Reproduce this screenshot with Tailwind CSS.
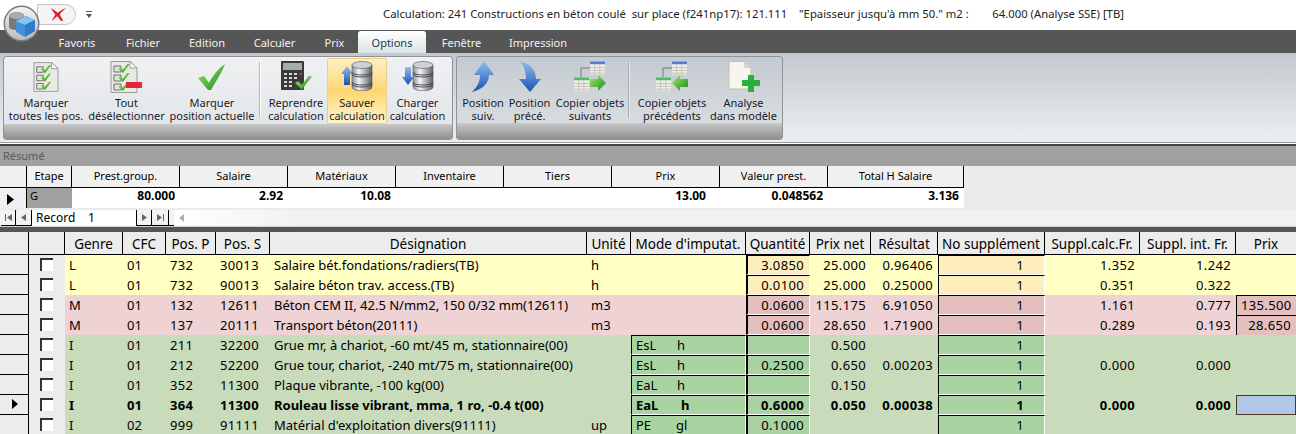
<!DOCTYPE html>
<html lang="fr">
<head>
<meta charset="UTF-8">
<title>Calculation</title>
<script src="https://cdn.jsdelivr.net/npm/@tailwindcss/browser@4"></script>
</head>
<body class="bg-white font-['Noto_Sans',sans-serif] text-black">
<!-- shared icon parts -->
<svg class="absolute w-0 h-0">
  <defs>
    <linearGradient id="green" x1="0" y1="0" x2="1" y2="1"><stop offset="0" stop-color="#a6e86c"/><stop offset="1" stop-color="#138a1c"/></linearGradient>
    <linearGradient id="blue" x1="0" y1="0" x2="0" y2="1"><stop offset="0" stop-color="#8fc1ee"/><stop offset="1" stop-color="#1b50b4"/></linearGradient>
    <linearGradient id="disk" x1="0" y1="0" x2="1" y2="0"><stop offset="0" stop-color="#8b8f94"/><stop offset=".35" stop-color="#f4f4f4"/><stop offset="1" stop-color="#5d6065"/></linearGradient>
    <linearGradient id="orb" x1="0" y1="0" x2="0" y2="1"><stop offset="0" stop-color="#f4f4f4"/><stop offset="1" stop-color="#bcbcbc"/></linearGradient>
    <symbol id="check" viewBox="0 0 10 8"><path d="M0 4 2 3 4 5 8 0 10 0 4 8z" fill="url(#green)"/></symbol>
    <symbol id="list" viewBox="0 0 28 32">
      <path d="M1 .5H20L27 7V31.5H1z" fill="#e8e8e4" stroke="#9a9a96"/>
      <path d="M20 .5V7H27z" fill="#fff" stroke="#9a9a96"/>
      <path d="M4 5h7v6H4zM4 14h7v6H4zM4 23h7v6H4z" fill="#dfe3dc" stroke="#707070"/>
      <use href="#check" x="8" y="3" width="12" height="9"/>
      <use href="#check" x="8" y="12" width="12" height="9"/>
      <use href="#check" x="8" y="21" width="12" height="9"/>
    </symbol>
    <symbol id="db" viewBox="0 0 22 30">
      <path d="M1 4V26C1 31 21 31 21 26V4z" fill="url(#disk)" stroke="#55585c" stroke-width=".6"/>
      <ellipse cx="11" cy="4" rx="10" ry="3.5" fill="#cfd2d5" stroke="#55585c" stroke-width=".6"/>
      <path d="M1 11C1 15 21 15 21 11M1 13C1 17 21 17 21 13M1 21C1 25 21 25 21 21M1 23C1 27 21 27 21 23" fill="none" stroke="#3d4044" stroke-width=".9"/>
    </symbol>
    <symbol id="sheet" viewBox="0 0 16 14">
      <rect width="16" height="14" fill="#f0f0e8"/>
      <rect width="16" height="3" fill="#5878d8"/>
      <path d="M0 6.5H16M0 9.500H16M0 12.500H16M5 3V14M10.500 3V14" stroke="#b8b8b0" stroke-width=".8"/>
    </symbol>
    <symbol id="sheetg" viewBox="0 0 16 14">
      <rect width="16" height="14" fill="#f0f0e8"/>
      <rect width="16" height="3" fill="#48c060"/>
      <path d="M0 6.5H16M0 9.500H16M0 12.500H16M5 3V14M10.500 3V14" stroke="#b8b8b0" stroke-width=".8"/>
    </symbol>
  </defs>
</svg>

<div class="relative w-[1296px] h-[434px] overflow-hidden">
  <!-- app button -->
  <div class="absolute left-[3px] top-[5px] z-10 w-[37px] h-[37px]">
    <svg viewBox="0 0 37 37" class="w-[37px] h-[37px]">
      <circle cx="18.500" cy="18.500" r="18" fill="#7c7c7c"/>
      <circle cx="18.500" cy="18.500" r="16.500" fill="url(#orb)"/>
      <path d="M6 11C6 6 21 6 21 11V22C21 26 6 26 6 22z" fill="#77797b"/>
      <ellipse cx="13.500" cy="10.500" rx="7.500" ry="3.500" fill="#a9abad"/>
      <path d="M13 16 23 11 32 15V26L22 32 13 27z" fill="#3f92d8"/>
      <path d="M13 16 23 11 32 15 22 20z" fill="#86c5f0"/>
      <path d="M22 20V32L32 26V15z" fill="#2f7cc6"/>
    </svg>
  </div>

  <!-- title bar -->
  <div class="flex items-center h-[30px] pl-[37px] pb-[1px]">
    <div class="flex items-center justify-center w-[39px] h-[21px] border border-[#c4c4c4] rounded-r-full bg-[#f4f4f4]">
      <svg viewBox="0 0 20 16" class="w-[18px] h-[15px] ml-[2px]"><path d="M2 1C6 3 8 5 10 6 12 4 15 2 19 1 16 3 13 6 12 8 13 11 15 13 16 15L13 15C12 13 10 11 9 10 7 12 5 14 3 15 4 13 6 10 7 8 5 5 3 3 2 1z" fill="#d8202a"/></svg>
    </div>
    <svg viewBox="0 0 6 7" class="w-[6px] h-[7px] ml-[10px]"><path d="M0 0H6V1H0zM0 3H6L3 7z" fill="#555"/></svg>
    <span class="ml-[291px] text-[11.300px] whitespace-pre text-[#222]">Calculation: 241 Constructions en béton coulé  sur place (f241np17): 121.111    "Epaisseur jusqu'à mm 50." m2 :        64.000 (Analyse SSE) [TB]</span>
  </div>

  <!-- tabs -->
  <div class="flex h-[23px] pl-[44px] bg-[#565656] text-[11px] text-[#f2f2f2] leading-[25px] text-center">
    <div class="w-[66px]">Favoris</div>
    <div class="w-[66px]">Fichier</div>
    <div class="w-[62px]">Edition</div>
    <div class="w-[73px]">Calculer</div>
    <div class="w-[47px]">Prix</div>
    <div class="w-[68px] rounded-t-[3px] bg-gradient-to-b from-white to-[#d9e6e8] text-[#1c3a44] mt-[1px] leading-[23px]">Options</div>
    <div class="w-[71px]">Fenêtre</div>
    <div class="w-[82px]">Impression</div>
  </div>

  <!-- ribbon -->
  <div class="flex gap-[3px] h-[89px] pt-[3px] pl-[3px] bg-gradient-to-b from-[#c4c9cf] to-[#ebeff1] text-[11px] leading-[13px] text-[#1a1a2a] text-center">
    <div class="flex flex-col w-[450px] h-[84px] border border-[#8e9398] rounded-[3px] overflow-hidden bg-gradient-to-b from-[#f0f1f3] to-[#dfe3e6]">
      <div class="flex h-[68px] pt-[1px]">
        <div class="w-[84px] flex flex-col items-center">
          <svg class="w-[26px] h-[32px] mt-[3px] mb-[3px]"><use href="#list"/></svg>
          <div class="whitespace-nowrap">Marquer<br>toutes les pos.</div>
        </div>
        <div class="w-[77px] flex flex-col items-center">
          <svg viewBox="0 0 34 32" class="w-[34px] h-[32px] mt-[3px] mb-[3px]"><use href="#list" width="28" height="32"/><rect x="16" y="21" width="16" height="6" fill="#e3273a"/></svg>
          <div class="whitespace-nowrap">Tout<br>désélectionner</div>
        </div>
        <div class="w-[94px] flex flex-col items-center">
          <svg viewBox="0 0 28 28" class="w-[28px] h-[28px] mt-[5px] mb-[5px]"><path d="M0 15 6 13 11 20C15 12 21 5 27 1 24 9 17 20 13 27H10z" fill="url(#green)"/></svg>
          <div class="whitespace-nowrap">Marquer<br>position actuelle</div>
        </div>
        <div class="w-[2px] h-[56px] mt-[4px] mr-[5px] bg-[#b4b7ba] border-r border-white"></div>
        <div class="w-[60px] flex flex-col items-center">
          <svg viewBox="0 0 32 30" class="w-[32px] h-[30px] mt-[3px] mb-[5px]">
            <rect x="1" width="23" height="29" rx="1" fill="#3a3a3a"/>
            <rect x="3" y="2" width="19" height="7" fill="#a8aca8"/>
            <path d="M4 12h3v2H4zM9 12h3v2H9zM14 12h3v2h-3zM4 16h3v2H4zM9 16h3v2H9zM14 16h3v2h-3zM4 20h3v2H4zM9 20h3v2H9zM4 24h3v2H4zM9 24h3v2H9z" fill="#d8d8d8"/>
            <rect x="19" y="12" width="3" height="2" fill="#d83030"/>
            <use href="#check" x="15" y="15" width="17" height="14"/>
          </svg>
          <div class="whitespace-nowrap">Reprendre<br>calculation</div>
        </div>
        <div class="w-[60px] h-[66px] ml-[1px] flex flex-col items-center rounded-[2px] border border-[#e8cf8e] bg-gradient-to-b from-[#fff0c0] via-[#fed671] to-[#fff3c8]">
          <svg viewBox="0 0 32 30" class="w-[32px] h-[30px] mt-[2px] mb-[5px]"><use href="#db" x="10" width="22" height="30"/><path d="M6 5 12 13H9V24H3V13H0z" fill="url(#blue)"/></svg>
          <div class="whitespace-nowrap">Sauver<br>calculation</div>
        </div>
        <div class="w-[59px] ml-[1px] flex flex-col items-center">
          <svg viewBox="0 0 32 30" class="w-[32px] h-[30px] mt-[3px] mb-[5px]"><use href="#db" x="10" width="22" height="30"/><path d="M3 6H9V16H12L6 24 0 16H3z" fill="url(#blue)"/></svg>
          <div class="whitespace-nowrap">Charger<br>calculation</div>
        </div>
      </div>
      <div class="h-[16px] bg-gradient-to-b from-[#c9c9c9] to-[#8f8f8f]"></div>
    </div>

    <div class="flex flex-col w-[327px] h-[84px] border border-[#8e9398] rounded-[3px] overflow-hidden bg-gradient-to-b from-[#c4cad1] to-[#dde1e4]">
      <div class="flex h-[68px] pt-[1px] pl-[3px]">
        <div class="w-[46px] flex flex-col items-center">
          <svg viewBox="0 0 24 32" class="w-[24px] h-[32px] mt-[3px] mb-[3px]"><path d="M13 0 23 14H18C18 22 12 28 1 31 7 25 9 20 9 14H3z" fill="url(#blue)"/></svg>
          <div class="whitespace-nowrap">Position<br>suiv.</div>
        </div>
        <div class="w-[47px] flex flex-col items-center">
          <svg viewBox="0 0 24 32" class="w-[24px] h-[32px] mt-[3px] mb-[3px]"><path d="M2 0C12 2 18 9 18 18H23L12 31 1 18H8C8 11 6 5 2 0z" fill="url(#blue)"/></svg>
          <div class="whitespace-nowrap">Position<br>précé.</div>
        </div>
        <div class="w-[70px] ml-[2px] flex flex-col items-center">
          <svg viewBox="0 0 32 32" class="w-[32px] h-[32px] mt-[3px] mb-[3px]"><use href="#sheet" x="16" width="15" height="14"/><use href="#sheetg" y="16" width="15" height="14"/><path d="M7 16V7H16" fill="none" stroke="#777"/><path d="M16 18H24V14L32 22 24 30V26H16z" fill="url(#green)"/></svg>
          <div class="whitespace-nowrap">Copier objets<br>suivants</div>
        </div>
        <div class="w-[2px] h-[56px] mt-[4px] ml-[3px] mr-[6px] bg-[#a9adb1] border-r border-[#e8e8e8]"></div>
        <div class="w-[72px] flex flex-col items-center">
          <svg viewBox="0 0 32 32" class="w-[32px] h-[32px] mt-[3px] mb-[3px]"><use href="#sheet" x="16" width="15" height="14"/><use href="#sheetg" y="16" width="15" height="14"/><path d="M7 16V7H16" fill="none" stroke="#777"/><path d="M32 18H24V14L16 22 24 30V26H32z" fill="url(#green)"/></svg>
          <div class="whitespace-nowrap">Copier objets<br>précédents</div>
        </div>
        <div class="w-[71px] flex flex-col items-center">
          <svg viewBox="0 0 32 32" class="w-[32px] h-[32px] mt-[3px] mb-[3px]"><path d="M1 .5H16L23 7V28H1z" fill="#f6f6ee" stroke="#c8c490"/><path d="M16 .5V7H23z" fill="#d8d8d8"/><path d="M20 14H26V19H32V25H26V31H20V25H14V19H20z" fill="#28b038"/></svg>
          <div class="whitespace-nowrap">Analyse<br>dans modèle</div>
        </div>
      </div>
      <div class="h-[16px] bg-gradient-to-b from-[#c9c9c9] to-[#8f8f8f]"></div>
    </div>
  </div>
  <div class="h-[1px] bg-[#999]"></div>
  <div class="h-[1px] bg-white"></div>
  <div class="h-[2px] bg-[#444]"></div>

  <!-- résumé -->
  <div class="h-[20px] bg-[#a0a0a0] pl-[3px] text-[11px] leading-[20px] text-[#5a5a5a]">Résumé</div>
  <div class="h-[60px] bg-[#ebebeb]">
    <div class="grid grid-cols-[27px_45px_108px_108px_108px_108px_108px_108px_108px_136px] w-[964px] h-[22px] text-[11px] leading-[20px] text-center bg-[#f0f0f0] border-b border-black [&>div]:border-r [&>div]:border-black">
      <div></div><div>Etape</div><div>Prest.group.</div><div>Salaire</div><div>Matériaux</div><div>Inventaire</div><div>Tiers</div><div>Prix</div><div>Valeur prest.</div><div>Total H Salaire</div>
    </div>
    <div class="grid grid-cols-[27px_45px_108px_108px_108px_108px_108px_108px_108px_136px] w-[964px] h-[20px] bg-white text-[12px] font-bold leading-[15px] text-right [&>div]:pr-[5px]">
      <div class="flex items-center justify-center bg-[#f0f0f0] border-r border-black"><svg viewBox="0 0 7 11" class="w-[7px] h-[11px] mt-[3px]"><path d="M0 0 7 5.500 0 11z"/></svg></div>
      <div class="bg-[#a0a0a0] text-left font-normal text-[11px] pl-[3px]">G</div>
      <div>80.000</div><div>2.92</div><div>10.08</div><div></div><div></div><div class="!pr-[14px]">13.00</div><div>0.048562</div><div>3.136</div>
    </div>

    <!-- record navigator -->
    <div class="flex h-[16px] mt-[2px] text-[12px] leading-[16px] bg-[#f2f2f2]">
      <div class="flex items-center justify-center w-[15px] ml-[1px] border-r border-b border-black"><svg viewBox="0 0 7 7" class="w-[7px] h-[7px]"><path d="M0 0H1V7H0zM7 0V7L2 3.500z" fill="#666"/></svg></div>
      <div class="flex items-center justify-center w-[16px] border-r border-b border-black"><svg viewBox="0 0 5 7" class="w-[5px] h-[7px]"><path d="M5 0V7L0 3.500z" fill="#666"/></svg></div>
      <div class="w-[49px] pl-[4px] bg-white">Record</div>
      <div class="w-[55px] pl-[7px] bg-white">1</div>
      <div class="flex items-center justify-center w-[16px] border-l border-r border-b border-black"><svg viewBox="0 0 5 7" class="w-[5px] h-[7px]"><path d="M0 0V7L5 3.500z" fill="#666"/></svg></div>
      <div class="flex items-center justify-center w-[17px] border-r border-b border-black"><svg viewBox="0 0 7 7" class="w-[7px] h-[7px]"><path d="M0 0V7L5 3.500zM6 0H7V7H6z" fill="#666"/></svg></div>
      <div class="w-[5px] border-b border-black"></div>
      <div class="flex items-center pl-[5px] w-[120px] bg-gradient-to-r from-white to-[#f2f2f2]"><svg viewBox="0 0 5 8" class="w-[5px] h-[8px]"><path d="M5 0V8L0 4z" fill="#9fb0c4"/></svg></div>
    </div>
  </div>
  <div class="h-[1px] bg-[#d0d0d0]"></div>
  <div class="h-[5px] bg-[#565656]"></div>

  <!-- positions -->
  <table class="table-fixed border-separate border-spacing-0 w-[1296px] text-[13px] leading-[16px] [&_td]:h-[20px] [&_td]:p-0 [&_td]:pb-[1px] [&_td]:whitespace-nowrap [&_td]:overflow-hidden">
    <colgroup>
      <col class="w-[29px]"><col class="w-[36px]"><col class="w-[58px]"><col class="w-[43px]"><col class="w-[50px]"><col class="w-[54px]"><col class="w-[317px]"><col class="w-[44px]"><col class="w-[115px]"><col class="w-[64px]"><col class="w-[61px]"><col class="w-[67px]"><col class="w-[107px]"><col class="w-[95px]"><col class="w-[96px]"><col class="w-[60px]">
    </colgroup>
    <thead>
      <tr class="bg-[#ececec] text-center text-[13.500px] [&>th]:h-[23px] [&>th]:p-0 [&>th]:pt-[1px] [&>th]:font-normal [&>th]:whitespace-nowrap [&>th]:border-r [&>th]:border-b [&>th]:border-black">
        <th></th><th></th><th>Genre</th><th>CFC</th><th>Pos. P</th><th>Pos. S</th><th>Désignation</th><th>Unité</th><th>Mode d'imputat.</th><th>Quantité</th><th>Prix net</th><th>Résultat</th><th>No supplément</th><th>Suppl.calc.Fr.</th><th>Suppl. int. Fr.</th><th class="!border-r-0">Prix</th>
      </tr>
    </thead>
    <tbody class="[&_td:nth-child(n+3)]:pl-[4px] [&_td:nth-child(n+10)]:text-right [&_td:nth-child(n+10)]:pr-[5px] [&_td:nth-child(n+10)]:tracking-[.35px] [&_td:nth-child(5)]:tracking-[.35px] [&_td:nth-child(6)]:tracking-[.35px]">
      <tr class="bg-[#ffffc4]">
        <td class="bg-[#ececec] border-r border-b border-black"></td>
        <td class="bg-[#ececec]"><span class="block w-[13px] h-[13px] ml-[11px] bg-white border-t-2 border-l-2 border-[#333]"></span></td>
        <td>L</td><td>01</td><td>732</td><td>30013</td><td>Salaire bét.fondations/radiers(TB)</td><td>h</td><td></td>
        <td class="bg-[#fdeebc] border border-l-2 border-t-black border-l-black border-b-white border-r-white">3.0850</td><td>25.000</td><td>0.96406</td>
        <td class="bg-[#fdeebc] border border-t-black border-l-black border-b-white border-r-white !pr-[20px]">1</td><td>1.352</td><td>1.242</td><td></td>
      </tr>
      <tr class="bg-[#ffffc4]">
        <td class="bg-[#ececec] border-r border-b border-black"></td>
        <td class="bg-[#ececec]"><span class="block w-[13px] h-[13px] ml-[11px] bg-white border-t-2 border-l-2 border-[#333]"></span></td>
        <td>L</td><td>01</td><td>732</td><td>90013</td><td>Salaire béton trav. access.(TB)</td><td>h</td><td></td>
        <td class="bg-[#fdeebc] border border-l-2 border-t-black border-l-black border-b-white border-r-white">0.0100</td><td>25.000</td><td>0.25000</td>
        <td class="bg-[#fdeebc] border border-t-black border-l-black border-b-white border-r-white !pr-[20px]">1</td><td>0.351</td><td>0.322</td><td></td>
      </tr>
      <tr class="bg-[#efd2d3]">
        <td class="bg-[#ececec] border-r border-b border-black"></td>
        <td class="bg-[#ececec]"><span class="block w-[13px] h-[13px] ml-[11px] bg-white border-t-2 border-l-2 border-[#333]"></span></td>
        <td>M</td><td>01</td><td>132</td><td>12611</td><td>Béton CEM II, 42.5 N/mm2, 150 0/32 mm(12611)</td><td>m3</td><td></td>
        <td class="bg-[#e4bfbd] border border-l-2 border-t-black border-l-black border-b-white border-r-white">0.0600</td><td>115.175</td><td>6.91050</td>
        <td class="bg-[#e4bfbd] border border-t-black border-l-black border-b-white border-r-white !pr-[20px]">1</td><td>1.161</td><td>0.777</td>
        <td class="bg-[#e4bfbd] border-t border-l border-black">135.500</td>
      </tr>
      <tr class="bg-[#efd2d3]">
        <td class="bg-[#ececec] border-r border-b border-black"></td>
        <td class="bg-[#ececec]"><span class="block w-[13px] h-[13px] ml-[11px] bg-white border-t-2 border-l-2 border-[#333]"></span></td>
        <td>M</td><td>01</td><td>137</td><td>20111</td><td>Transport béton(20111)</td><td>m3</td><td></td>
        <td class="bg-[#e4bfbd] border border-l-2 border-t-black border-l-black border-b-white border-r-white">0.0600</td><td>28.650</td><td>1.71900</td>
        <td class="bg-[#e4bfbd] border border-t-black border-l-black border-b-white border-r-white !pr-[20px]">1</td><td>0.289</td><td>0.193</td>
        <td class="bg-[#e4bfbd] border-t border-l border-black">28.650</td>
      </tr>
      <tr class="bg-[#c8dbba]">
        <td class="bg-[#ececec] border-r border-b border-black"></td>
        <td class="bg-[#ececec]"><span class="block w-[13px] h-[13px] ml-[11px] bg-white border-t-2 border-l-2 border-[#333]"></span></td>
        <td>I</td><td>01</td><td>211</td><td>32200</td><td>Grue mr, à chariot, -60 mt/45 m, stationnaire(00)</td><td></td>
        <td class="bg-[#a9d3a1] border border-t-black border-l-black border-b-white border-r-white"><span class="inline-block w-[41px]">EsL</span>h</td>
        <td class="bg-[#a9d3a1] border border-l-2 border-t-black border-l-black border-b-white border-r-white"></td><td>0.500</td><td></td>
        <td class="bg-[#a9d3a1] border border-t-black border-l-black border-b-white border-r-white !pr-[20px]">1</td><td></td><td></td><td></td>
      </tr>
      <tr class="bg-[#c8dbba]">
        <td class="bg-[#ececec] border-r border-b border-black"></td>
        <td class="bg-[#ececec]"><span class="block w-[13px] h-[13px] ml-[11px] bg-white border-t-2 border-l-2 border-[#333]"></span></td>
        <td>I</td><td>01</td><td>212</td><td>52200</td><td>Grue tour, chariot, -240 mt/75 m, stationnaire(00)</td><td></td>
        <td class="bg-[#a9d3a1] border border-t-black border-l-black border-b-white border-r-white"><span class="inline-block w-[41px]">EsL</span>h</td>
        <td class="bg-[#a9d3a1] border border-l-2 border-t-black border-l-black border-b-white border-r-white">0.2500</td><td>0.650</td><td>0.00203</td>
        <td class="bg-[#a9d3a1] border border-t-black border-l-black border-b-white border-r-white !pr-[20px]">1</td><td>0.000</td><td>0.000</td><td></td>
      </tr>
      <tr class="bg-[#c8dbba]">
        <td class="bg-[#ececec] border-r border-b border-black"></td>
        <td class="bg-[#ececec]"><span class="block w-[13px] h-[13px] ml-[11px] bg-white border-t-2 border-l-2 border-[#333]"></span></td>
        <td>I</td><td>01</td><td>352</td><td>11300</td><td>Plaque vibrante, -100 kg(00)</td><td></td>
        <td class="bg-[#a9d3a1] border border-t-black border-l-black border-b-white border-r-white"><span class="inline-block w-[41px]">EaL</span>h</td>
        <td class="bg-[#a9d3a1] border border-l-2 border-t-black border-l-black border-b-white border-r-white"></td><td>0.150</td><td></td>
        <td class="bg-[#a9d3a1] border border-t-black border-l-black border-b-white border-r-white !pr-[20px]">1</td><td></td><td></td><td></td>
      </tr>
      <tr class="bg-[#c8dbba] font-bold">
        <td class="bg-[#ececec] border-r border-b border-black"><svg viewBox="0 0 6 10" class="w-[6px] h-[10px] ml-[12px]"><path d="M0 0 6 5 0 10z"/></svg></td>
        <td class="bg-[#ececec]"><span class="block w-[13px] h-[13px] ml-[11px] bg-white border-t-2 border-l-2 border-[#333]"></span></td>
        <td>I</td><td>01</td><td>364</td><td>11300</td><td>Rouleau lisse vibrant, mma, 1 ro, -0.4 t(00)</td><td></td>
        <td class="bg-[#a9d3a1] border border-t-black border-l-black border-b-white border-r-white"><span class="inline-block w-[45px]">EaL</span>h</td>
        <td class="bg-[#a9d3a1] border border-l-2 border-t-black border-l-black border-b-white border-r-white">0.6000</td><td>0.050</td><td>0.00038</td>
        <td class="bg-[#a9d3a1] border border-t-black border-l-black border-b-white border-r-white !pr-[20px]">1</td><td>0.000</td><td>0.000</td>
        <td class="bg-[#b1c7e6] border border-[#4a3a20]"></td>
      </tr>
      <tr class="bg-[#c8dbba]">
        <td class="bg-[#ececec] border-r border-b border-black"></td>
        <td class="bg-[#ececec]"><span class="block w-[13px] h-[13px] ml-[11px] bg-white border-t-2 border-l-2 border-[#333]"></span></td>
        <td>I</td><td>02</td><td>999</td><td>91111</td><td>Matérial d'exploitation divers(91111)</td><td>up</td>
        <td class="bg-[#a9d3a1] border border-t-black border-l-black border-b-white border-r-white"><span class="inline-block w-[40px]">PE</span>gl</td>
        <td class="bg-[#a9d3a1] border border-l-2 border-t-black border-l-black border-b-white border-r-white">0.1000</td><td></td><td></td>
        <td class="bg-[#a9d3a1] border border-t-black border-l-black border-b-white border-r-white !pr-[20px]">1</td><td></td><td></td><td></td>
      </tr>
    </tbody>
  </table>
</div>
</body>
</html>
